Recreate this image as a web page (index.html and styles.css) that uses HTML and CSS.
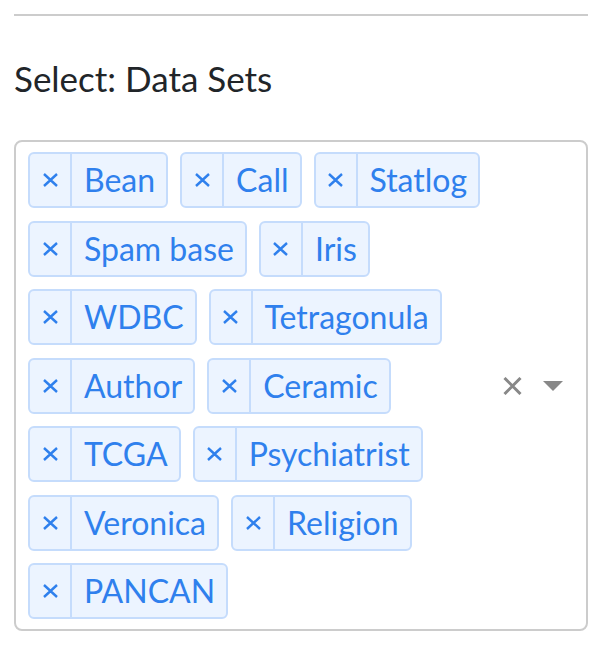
FILE: index.html
```html
<!DOCTYPE html>
<html>
<head>
<meta charset="utf-8">
<link rel="stylesheet" href="styles.css">
</head>
<body>
<hr class="rule">
<div class="label">Select: Data Sets</div>
<div class="select">
  <div class="values">
    <div class="tag"><span class="rm"><svg width="15" height="14" viewBox="0 0 15 14"><path d="M1 1L14 13M14 1L1 13" stroke="currentColor" stroke-width="2.4" fill="none"/></svg></span><span class="txt">Bean</span></div>
    <div class="tag"><span class="rm"><svg width="15" height="14" viewBox="0 0 15 14"><path d="M1 1L14 13M14 1L1 13" stroke="currentColor" stroke-width="2.4" fill="none"/></svg></span><span class="txt">Call</span></div>
    <div class="tag"><span class="rm"><svg width="15" height="14" viewBox="0 0 15 14"><path d="M1 1L14 13M14 1L1 13" stroke="currentColor" stroke-width="2.4" fill="none"/></svg></span><span class="txt">Statlog</span></div>
    <div class="tag"><span class="rm"><svg width="15" height="14" viewBox="0 0 15 14"><path d="M1 1L14 13M14 1L1 13" stroke="currentColor" stroke-width="2.4" fill="none"/></svg></span><span class="txt">Spam base</span></div>
    <div class="tag"><span class="rm"><svg width="15" height="14" viewBox="0 0 15 14"><path d="M1 1L14 13M14 1L1 13" stroke="currentColor" stroke-width="2.4" fill="none"/></svg></span><span class="txt">Iris</span></div>
    <div class="tag"><span class="rm"><svg width="15" height="14" viewBox="0 0 15 14"><path d="M1 1L14 13M14 1L1 13" stroke="currentColor" stroke-width="2.4" fill="none"/></svg></span><span class="txt">WDBC</span></div>
    <div class="tag"><span class="rm"><svg width="15" height="14" viewBox="0 0 15 14"><path d="M1 1L14 13M14 1L1 13" stroke="currentColor" stroke-width="2.4" fill="none"/></svg></span><span class="txt">Tetragonula</span></div>
    <div class="tag"><span class="rm"><svg width="15" height="14" viewBox="0 0 15 14"><path d="M1 1L14 13M14 1L1 13" stroke="currentColor" stroke-width="2.4" fill="none"/></svg></span><span class="txt">Author</span></div>
    <div class="tag"><span class="rm"><svg width="15" height="14" viewBox="0 0 15 14"><path d="M1 1L14 13M14 1L1 13" stroke="currentColor" stroke-width="2.4" fill="none"/></svg></span><span class="txt">Ceramic</span></div>
    <div class="tag"><span class="rm"><svg width="15" height="14" viewBox="0 0 15 14"><path d="M1 1L14 13M14 1L1 13" stroke="currentColor" stroke-width="2.4" fill="none"/></svg></span><span class="txt">TCGA</span></div>
    <div class="tag"><span class="rm"><svg width="15" height="14" viewBox="0 0 15 14"><path d="M1 1L14 13M14 1L1 13" stroke="currentColor" stroke-width="2.4" fill="none"/></svg></span><span class="txt">Psychiatrist</span></div>
    <div class="tag"><span class="rm"><svg width="15" height="14" viewBox="0 0 15 14"><path d="M1 1L14 13M14 1L1 13" stroke="currentColor" stroke-width="2.4" fill="none"/></svg></span><span class="txt">Veronica</span></div>
    <div class="tag"><span class="rm"><svg width="15" height="14" viewBox="0 0 15 14"><path d="M1 1L14 13M14 1L1 13" stroke="currentColor" stroke-width="2.4" fill="none"/></svg></span><span class="txt">Religion</span></div>
    <div class="tag"><span class="rm"><svg width="15" height="14" viewBox="0 0 15 14"><path d="M1 1L14 13M14 1L1 13" stroke="currentColor" stroke-width="2.4" fill="none"/></svg></span><span class="txt">PANCAN</span></div>
  </div>
  <div class="indicators">
    <svg class="clear" width="19" height="18" viewBox="0 0 19 18"><path d="M1.5 1L17.5 17M17.5 1L1.5 17" stroke="currentColor" stroke-width="3" fill="none"/></svg>
    <svg class="arrow" width="20" height="10" viewBox="0 0 20 10"><path d="M0 0H20L10 10Z" fill="currentColor"/></svg>
  </div>
</div>
</body>
</html>
```

FILE: styles.css
```css
html, body {
  background: #ffffff;
}
body {
  margin: 14px 8px 14px 14px;
  font-family: Lato, "Open Sans", sans-serif;
}
.rule {
  margin: 0;
  border: none;
  height: 2px;
  background: #cccccc;
}
.label {
  margin-top: 41px;
  font-size: 35px;
  line-height: 43px;
  color: #212529;
}
.select {
  margin-top: 40px;
  border: 2px solid #cccccc;
  border-radius: 8px;
  display: flex;
  align-items: center;
  min-height: 100px;
}
.values {
  flex: 1;
  display: flex;
  flex-wrap: wrap;
  column-gap: 12px;
  row-gap: 12.5px;
  padding: 10px 0 10px 12px;
}
.tag {
  display: flex;
  border: 2px solid #c5dcfc;
  border-radius: 6px;
  background: #ecf4ff;
  color: #2f80ed;
  font-size: 32px;
  line-height: 36px;
}
.rm {
  width: 40px;
  display: flex;
  align-items: center;
  justify-content: center;
  border-right: 2px solid #c5dcfc;
}
.rm svg {
  display: block;
}
.txt {
  padding: 8px 11px 8px 12px;
}
.indicators {
  display: flex;
  align-items: center;
  gap: 21px;
  padding: 0 23px 0 12px;
  color: #888888;
}
.indicators svg {
  display: block;
}
```
